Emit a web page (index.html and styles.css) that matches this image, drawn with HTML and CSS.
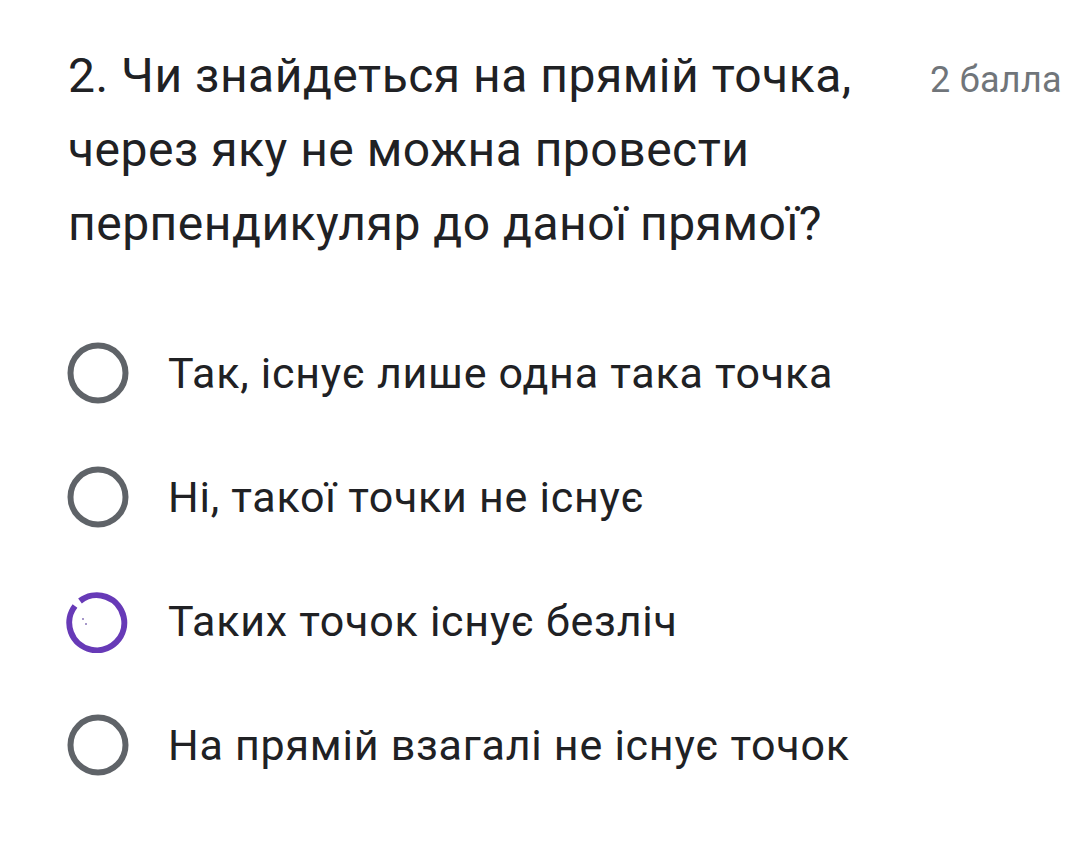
FILE: index.html
```html
<!DOCTYPE html>
<html lang="uk">
<head>
<meta charset="utf-8">
<link rel="stylesheet" href="styles.css">
</head>
<body>
<div class="card">
  <div class="head">
    <div class="question">2. Чи знайдеться на прямій точка, через яку не можна провести перпендикуляр до даної прямої?</div>
    <div class="points">2 балла</div>
  </div>
  <div class="options">
    <div class="option">
      <svg class="radio" viewBox="0 0 64 64"><circle cx="32" cy="32" r="27.5" fill="none" stroke="#5f6368" stroke-width="6"/></svg>
      <span class="label">Так, існує лише одна така точка</span>
    </div>
    <div class="option">
      <svg class="radio" viewBox="0 0 64 64"><circle cx="32" cy="32" r="27.5" fill="none" stroke="#5f6368" stroke-width="6"/></svg>
      <span class="label">Ні, такої точки не існує</span>
    </div>
    <div class="option">
      <svg class="radio" viewBox="0 0 64 64"><path d="M9 17 A27.5 27.5 0 1 0 14 12" fill="none" stroke="#673ab7" stroke-width="6"/><circle cx="17" cy="30" r="1" fill="#8a76b8"/><circle cx="20" cy="35" r="1" fill="#8a76b8"/></svg>
      <span class="label">Таких точок існує безліч</span>
    </div>
    <div class="option">
      <svg class="radio" viewBox="0 0 64 64"><circle cx="32" cy="32" r="27.5" fill="none" stroke="#5f6368" stroke-width="6"/></svg>
      <span class="label">На прямій взагалі не існує точок</span>
    </div>
  </div>
</div>
</body>
</html>
```

FILE: styles.css
```css
html, body {
  margin: 0;
  padding: 0;
  background: #ffffff;
}
body {
  font-family: Roboto, "Noto Sans", sans-serif;
  color: #202124;
}
.card {
  padding: 39px 0 0 68px;
}
.head {
  display: flex;
  align-items: flex-start;
}
.question {
  width: 840px;
  font-size: 48px;
  line-height: 74px;
  color: #202124;
  letter-spacing: 0.5px;
}
.points {
  margin-left: 22px;
  padding-top: 21px;
  font-size: 36px;
  line-height: 40px;
  color: #70757a;
  white-space: nowrap;
  letter-spacing: 0.3px;
}
.options {
  display: flex;
  flex-direction: column;
  gap: 60px;
  margin-top: 80px;
}
.option {
  display: flex;
  align-items: center;
  height: 64px;
}
.radio {
  width: 64px;
  height: 64px;
  margin-left: -2px;
  flex: none;
}
.label {
  margin-left: 38px;
  font-size: 43px;
  line-height: 64px;
  color: #202124;
  letter-spacing: 0.75px;
}
```
